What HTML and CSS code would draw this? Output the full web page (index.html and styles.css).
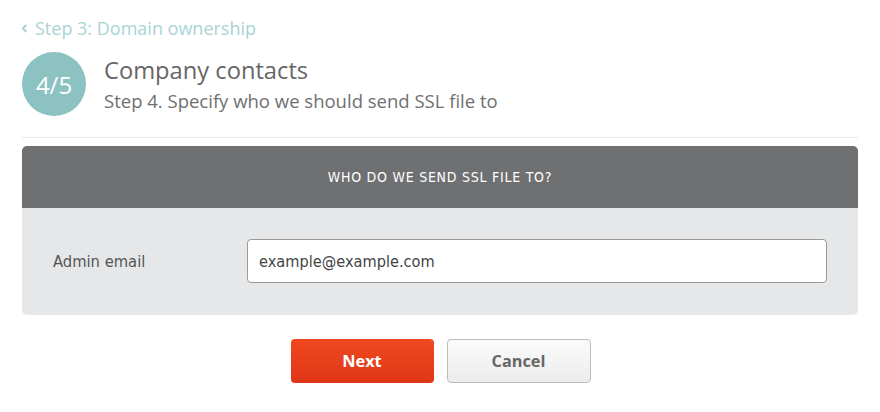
FILE: index.html
```html
<!DOCTYPE html>
<html>
<head>
<meta charset="utf-8">
<link rel="stylesheet" href="styles.css">
</head>
<body>
<div class="page">
  <a class="back" href="#">
    <svg class="chev" width="7" height="11" viewBox="0 0 7 11"><path d="M5.4 2 L1.8 5.5 L5.4 9" fill="none" stroke="currentColor" stroke-width="2"/></svg>
    <span>Step 3: Domain ownership</span>
  </a>
  <div class="step">
    <div class="badge">4/5</div>
    <div class="step-text">
      <h1 class="title">Company contacts</h1>
      <p class="subtitle">Step 4. Specify who we should send SSL file to</p>
    </div>
  </div>
  <hr class="divider">
  <section class="panel">
    <div class="panel-head">WHO DO WE SEND SSL FILE TO?</div>
    <div class="panel-body">
      <label class="label">Admin email</label>
      <div class="input">example@example.com</div>
    </div>
  </section>
  <div class="actions">
    <button class="btn btn-next">Next</button>
    <button class="btn btn-cancel">Cancel</button>
  </div>
</div>
</body>
</html>
```

FILE: styles.css
```css
* { box-sizing: border-box; }
html, body { margin: 0; padding: 0; background: #fff; }
body { font-family: "Open Sans", "Noto Sans", sans-serif; color: #666; }
.page { padding: 16px 22px 0 22px; width: 880px; }
.back {
  display: flex; align-items: center; gap: 7px;
  color: #a9d4d4; text-decoration: none;
  font-family: "Open Sans", sans-serif; font-size: 18px; height: 24px; line-height: 24px;
  margin-left: -1px;
}
.chev { display: block; }
.step { display: flex; align-items: center; margin-top: 12px; gap: 18px; }
.badge {
  width: 64px; height: 64px; border-radius: 50%; flex: none;
  background: #8cc2c2; color: #fff;
  display: flex; align-items: center; justify-content: center;
  font-family: "Open Sans", sans-serif; font-size: 24px;
}
.title { margin: 0; font-family: "Open Sans", sans-serif; font-weight: 400; font-size: 23.7px; color: #666; line-height: 28px; }
.subtitle { margin: 5px 0 0 0; font-family: "Open Sans", sans-serif; font-size: 18.5px; color: #707070; line-height: 24px; }
.divider { border: 0; height: 1px; background: #e8e8e8; margin: 21px 0 8px 0; }
.panel { border-radius: 5px; overflow: hidden; }
.panel-head {
  background: #6f7072; color: #fff; height: 62px;
  display: flex; align-items: center; justify-content: center;
  font-family: "DejaVu Sans Condensed", sans-serif; font-size: 14px; letter-spacing: 0.75px;
}
.panel-body {
  background: #e6e7e9; height: 107px;
  display: flex; align-items: center; padding: 0 31px 0 31px;
}
.label { width: 194px; font-family: "DejaVu Sans Condensed", sans-serif; font-size: 16.4px; color: #555; }
.input {
  flex: 1; height: 44px; margin-top: -1px;
  background: #fff; border: 1px solid #9a9a9a; border-radius: 4px;
  display: flex; align-items: center; padding: 0 11px;
  font-family: "DejaVu Sans Condensed", sans-serif; font-size: 16.2px; color: #444;
}
.actions { display: flex; justify-content: center; gap: 13px; margin-top: 24px; padding-left: 1px; }
.btn {
  width: 143px; height: 44px; border-radius: 4px;
  font-family: "Open Sans", sans-serif; font-weight: 700; font-size: 16.3px;
}
.btn-next { background: linear-gradient(#f0481f, #df3618); color: #fff; border: 0; }
.btn-cancel { background: linear-gradient(#fbfbfb, #ececec); color: #666; border: 1px solid #bdbdbd; width: 144px; }
```
